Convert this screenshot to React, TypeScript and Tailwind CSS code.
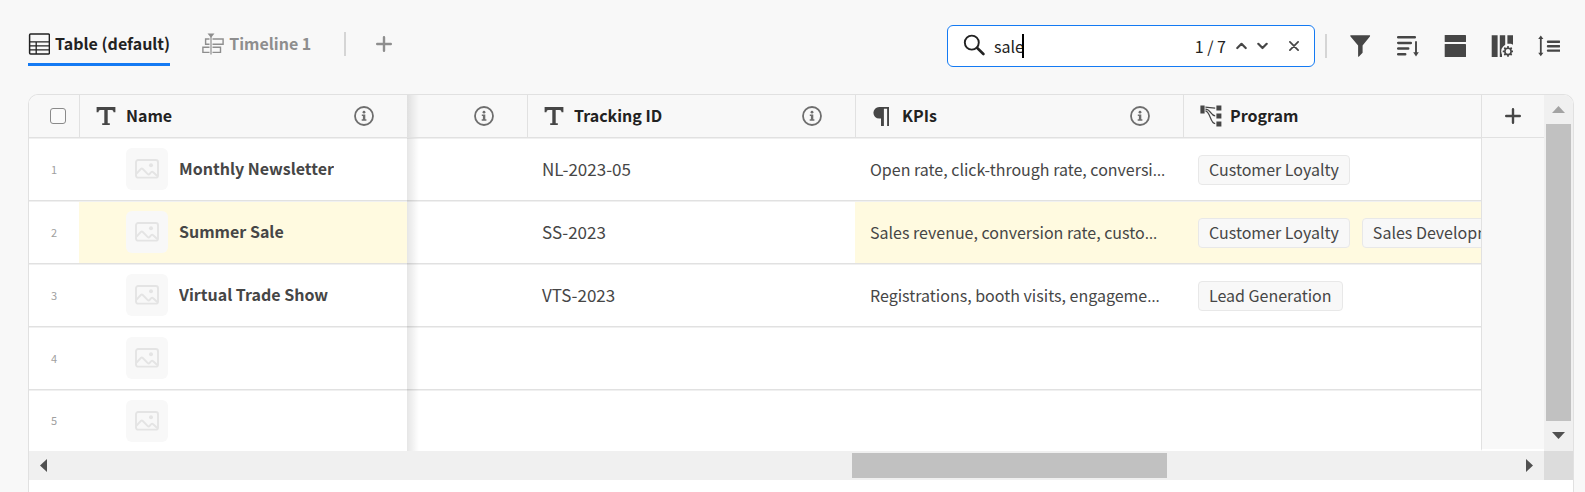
import { useState, type ReactNode } from "react";

type Row = { name: string; tracking: string; kpis: string; programs: string[]; nameHit?: boolean; kpiHit?: boolean };

const rows: Row[] = [
  { name: "Monthly Newsletter", tracking: "NL-2023-05", kpis: "Open rate, click-through rate, conversi", programs: ["Customer Loyalty"] },
  {
    name: "Summer Sale",
    tracking: "SS-2023",
    kpis: "Sales revenue, conversion rate, custo",
    programs: ["Customer Loyalty", "Sales Development"],
    nameHit: true,
    kpiHit: true,
  },
  { name: "Virtual Trade Show", tracking: "VTS-2023", kpis: "Registrations, booth visits, engageme", programs: ["Lead Generation"] },
  { name: "", tracking: "", kpis: "", programs: [] },
  { name: "", tracking: "", kpis: "", programs: [] },
];

function TableIcon() {
  return (
    <svg width="22" height="22" viewBox="0 0 22 22" fill="none" stroke="#222" aria-hidden="true">
      <rect x="1.6" y="1" width="19.800" height="20" rx="1" strokeWidth="1.5" />
      <path d="M1.600 8.800h20M1.600 12.800h20M1.600 16.800h20M8.200 9v12" strokeWidth="1.300" />
    </svg>
  );
}

function TimelineIcon() {
  return (
    <svg width="22" height="22" viewBox="0 0 22 22" fill="none" stroke="#8e8e8e" aria-hidden="true">
      <path d="M5.5 .5h7L9 4.8z" fill="#8e8e8e" stroke="none" />
      <path d="M9 3v18.5" strokeWidth="1.2" />
      <path d="M7.500 6H3.600v5.200h3.900M10.500 6h10.600v5.200H10.500M7.500 14.200H.900v5.200h6.600M10.500 14.200h8v5.200h-8" strokeWidth="1.400" />
    </svg>
  );
}

function PlusIcon() {
  return (
    <svg width="16" height="16" viewBox="0 0 16 16" fill="none" stroke="currentColor" strokeWidth="2.4" strokeLinecap="round" aria-hidden="true">
      <path d="M8 1.2v13.6M1.2 8h13.6" />
    </svg>
  );
}

function SearchIcon() {
  return (
    <svg width="22" height="22" viewBox="0 0 22 22" fill="none" stroke="#222" aria-hidden="true">
      <circle cx="8.8" cy="8.6" r="7" strokeWidth="1.9" />
      <path d="M14 13.8l6.400 6.200" strokeWidth="2.600" strokeLinecap="round" />
    </svg>
  );
}

function InfoIcon() {
  return (
    <svg width="20" height="20" viewBox="0 0 20 20" fill="#6e6e6e" aria-hidden="true">
      <circle cx="10" cy="10" r="9" fill="none" stroke="#6e6e6e" strokeWidth="1.8" />
      <circle cx="10" cy="6.2" r="1.4" />
      <path d="M7.800 8.400h3.500v4.900h1.100v1.500H7.700v-1.500h1.200V9.900H7.800z" />
    </svg>
  );
}

function TextIcon() {
  return (
    <svg width="20" height="20" viewBox="0 0 20 20" fill="#464646" aria-hidden="true">
      <path d="M.6 1h18.8v5.2h-1.9c-.1-1.5-.6-2.2-2-2.2h-3.8v13.2h2.100V19H6.200v-1.800h2.100V4H4.500c-1.400 0-1.900.7-2 2.200H.6z" />
    </svg>
  );
}

function ParagraphIcon() {
  return (
    <svg width="20" height="20" viewBox="0 0 20 20" fill="#464646" aria-hidden="true">
      <path d="M7.200 1H17v19h-1.900V2.800h-3.200V20H9v-7.400H7.200a5.800 5.800 0 0 1 0-11.600z" />
    </svg>
  );
}

function ConnectionIcon() {
  return (
    <svg width="22" height="22" viewBox="0 0 22 22" fill="#464646" aria-hidden="true">
      <path d="M.4.6h4.200v8H.4zM16.400.6h5v5h-5zM16.400 8.600h5v5h-5zM16.400 16.400h5v5h-5z" />
      <path d="M5.400 2.200c4 0 5 .900 9.800.900M5.400 4.100c5.600 0 5 6.800 9.800 6.800M5.400 5.800c5.200.600 4.500 12.800 9.800 12.800" fill="none" stroke="#464646" strokeWidth="1.200" />
    </svg>
  );
}

function FilterIcon() {
  return (
    <svg width="22" height="22" viewBox="0 0 22 22" fill="#464646" aria-hidden="true">
      <path d="M.900.300h18.600c.600 0 .800.600.400 1.100L12.600 10.600v7.200L9 21.600c-.400.400-.900.200-.900-.400V10.600L.500 1.400C.100.900.300.300.900.300z" />
    </svg>
  );
}

function SortIcon() {
  return (
    <svg width="22" height="22" viewBox="0 0 22 22" fill="none" stroke="#464646" aria-hidden="true">
      <path d="M1.200 2.200h16.600M1.200 7.900h12.600M1.200 13.600h10M1.200 19.200h7" strokeWidth="2.500" strokeLinecap="round" />
      <path d="M19 7v11.500" strokeWidth="1.900" strokeLinecap="round" />
      <path d="M16.200 17.200h5.600L19 21.500z" fill="#464646" stroke="none" />
    </svg>
  );
}

function GroupIcon() {
  return (
    <svg width="22" height="22" viewBox="0 0 22 22" fill="#464646" aria-hidden="true">
      <rect x=".700" y="0" width="21.300" height="7" rx=".600" />
      <rect x=".700" y="9" width="21.300" height="13" rx=".600" />
    </svg>
  );
}

const teeth = [0, 45, 90, 135, 180, 225, 270, 315];

function ColumnsIcon() {
  return (
    <svg width="22" height="22" viewBox="0 0 22 22" fill="#464646" aria-hidden="true">
      <path d="M.700.300h5.900V22H.700zM8.800.300h5.400v9.400l-3.200 4V22H8.800zM16.400.300H22v9.400l-2-1h-3.600z" />
      <circle cx="17" cy="16.400" r="6.800" fill="#f8f8f8" />
      <circle cx="17" cy="16.400" r="3.100" fill="none" stroke="#464646" strokeWidth="1.600" />
      {teeth.map((a) => (
        <rect key={a} x="16.100" y="11.100" width="1.800" height="2.200" rx=".500" transform={`rotate(${a} 17 16.400)`} />
      ))}
    </svg>
  );
}

function RowHeightIcon() {
  return (
    <svg width="22" height="22" viewBox="0 0 22 22" fill="#464646" aria-hidden="true">
      <path d="M2.800 .500L5.400 4H.200zM2.800 21.300L.200 17.800h5.200z" />
      <path d="M2.800 3v16" fill="none" stroke="#464646" strokeWidth="1.800" />
      <path d="M10 6.700h11.300M10 11.200h11.300M10 15.600h11.300" fill="none" stroke="#464646" strokeWidth="2.400" strokeLinecap="round" />
    </svg>
  );
}

function PictureIcon() {
  return (
    <svg width="24" height="20" viewBox="0 0 24 20" fill="none" stroke="#e4e4e4" strokeWidth="1.900" aria-hidden="true">
      <rect x="1" y="1" width="22" height="17.600" rx="2.200" />
      <path d="M1.500 14.600l4.300-4.600q1-1 2 0l5 5.200q.700.700 1.500 0l1.900-2q1-1 2 0l4 3.800" />
      <circle cx="16" cy="6.200" r="2" fill="#e4e4e4" stroke="none" />
    </svg>
  );
}

const arrowPaths = {
  up: "M0 10l6.500-7 6.500 7z",
  down: "M0 2l6.500 7 6.500-7z",
  left: "M10 0l-7 6.500 7 6.500z",
  right: "M3 0l7 6.500-7 6.500z",
};

function Arrow({ dir, muted }: { dir: keyof typeof arrowPaths; muted?: boolean }) {
  return (
    <svg width="13" height="13" viewBox="0 0 13 13" fill={muted ? "#a3a3a3" : "#505050"} aria-hidden="true">
      <path d={arrowPaths[dir]} />
    </svg>
  );
}

function PinShadow({ last }: { last?: boolean }) {
  return (
    <span
      className={`absolute left-full top-0 w-3 bg-linear-to-r from-black/10 to-transparent ${last ? "bottom-0" : "-bottom-px"}`}
    />
  );
}

function HeaderCell({ icon, label, info, pinned, first }: { icon?: ReactNode; label?: string; info?: boolean; pinned?: boolean; first?: boolean }) {
  return (
    <th scope="col" className={`relative border-b border-[#e1e1e1] p-0 text-left font-bold ${first ? "" : "border-l"}`}>
      <div className="flex h-[42px] items-center pl-4 pr-[33px]">
        <span className="flex w-[30px] shrink-0 items-center">{icon}</span>
        <span className="truncate pb-0.5 leading-6">{label}</span>
        {info && (
          <button type="button" aria-label={`About ${label || "column"}`} className="ml-auto shrink-0">
            <InfoIcon />
          </button>
        )}
      </div>
      {pinned && <PinShadow />}
    </th>
  );
}

function Tag({ children }: { children: ReactNode }) {
  return (
    <span className="flex h-[30px] shrink-0 items-center whitespace-nowrap rounded border border-[#e8e8e8] bg-[#f8f8f8] px-2.5 pb-0.5 leading-6">
      {children}
    </span>
  );
}

function DataRow({ row, index, last }: { row: Row; index: number; last: boolean }) {
  const line = last ? "shadow-[inset_0_1px_0_#f0f0f0]" : "border-b border-[#e1e1e1] shadow-[inset_0_1px_0_#f0f0f0]";
  return (
    <tr className={last ? "h-[61px]" : "h-[63px]"}>
      <td className={`p-0 text-center text-[11px] text-[#a0a0a0] ${line}`}>{index}</td>
      <td className={`relative p-0 ${line} ${row.nameHit ? "bg-[#fffae0]" : ""}`}>
        <div className="flex items-center gap-[11px] pl-[47px]">
          <span className="flex size-[42px] shrink-0 items-center justify-center rounded-md bg-[#f8f8f8]">
            <PictureIcon />
          </span>
          <span className="truncate pb-0.5 font-bold leading-6">{row.name}</span>
        </div>
        <PinShadow last={last} />
      </td>
      <td className={`p-0 ${line}`} />
      <td className={`truncate py-0 pl-[15px] pr-4 text-[17px] leading-6 ${line}`}>{row.tracking}</td>
      <td className={`overflow-hidden whitespace-nowrap py-0 pl-[15px] pr-0 leading-6 ${line} ${row.kpiHit ? "bg-[#fffae0]" : ""}`}>
        {row.kpis}
        {row.kpis && <span className="font-['Open_Sans',sans-serif]">…</span>}
      </td>
      <td className={`overflow-hidden pb-0 pl-[15px] pr-0 pt-0.5 ${line} ${row.kpiHit ? "bg-[#fffae0]" : ""}`}>
        <div className="flex gap-3">
          {row.programs.map((p) => (
            <Tag key={p}>{p}</Tag>
          ))}
        </div>
      </td>
      <td className={`border-l border-[#e1e1e1] bg-[#f8f8f8] p-0 ${last ? "border-b-2 border-b-white" : ""}`} />
    </tr>
  );
}

export default function App() {
  const [query, setQuery] = useState("sale");
  return (
    <div className="flex min-h-screen flex-col bg-[#f8f8f8] pl-7 pr-[11px] font-['Noto_Sans_CJK_SC',sans-serif] text-base text-[#464646]">
      <header className="flex items-start justify-between pb-[27px] pr-3.5 pt-[25px]">
        <nav className="flex items-start font-bold">
          <button type="button" className="border-b-3 border-[#147af3] text-[#222]">
            <span className="flex h-[38px] items-center gap-[5px] leading-6">
              <TableIcon />
              <span className="pb-0.5">Table (default)</span>
            </span>
          </button>
          <button type="button" className="ml-8 flex h-[38px] items-center gap-[5px] leading-6 text-[#8e8e8e]">
            <TimelineIcon />
            <span className="pb-0.5">Timeline 1</span>
          </button>
          <div className="ml-[33px] flex h-[38px] items-center gap-[30px] text-[#8e8e8e]">
            <span className="h-6 w-0.5 bg-[#d5d5d5]" />
            <button type="button" aria-label="Add view">
              <PlusIcon />
            </button>
          </div>
        </nav>
        <div className="flex items-center">
          <div className="flex h-[42px] w-[368px] items-center rounded-md border border-[#147af3] bg-white px-[15px] text-[#222]">
            <span className="-mt-0.5 shrink-0">
              <SearchIcon />
            </span>
            <div className="relative ml-2 min-w-0 flex-1">
              <input
                type="text"
                aria-label="Search"
                value={query}
                onChange={(e) => setQuery(e.target.value)}
                className="block w-full bg-transparent pl-px leading-6 caret-transparent outline-none"
              />
              <span className="absolute left-[29px] top-0 h-6 w-0.5 bg-black" />
            </div>
            <span className="leading-6">1 / 7</span>
            <button type="button" aria-label="Previous match" className="ml-2.5">
              <svg width="11" height="8" viewBox="0 0 11 8" fill="none" stroke="#464646" strokeWidth="2.200" strokeLinecap="round" strokeLinejoin="round">
                <path d="M1.300 6l4.200-4.200L9.700 6" />
              </svg>
            </button>
            <button type="button" aria-label="Next match" className="ml-2.5">
              <svg width="11" height="8" viewBox="0 0 11 8" fill="none" stroke="#464646" strokeWidth="2.200" strokeLinecap="round" strokeLinejoin="round">
                <path d="M1.300 1.800L5.500 6l4.200-4.200" />
              </svg>
            </button>
            <button type="button" aria-label="Clear search" className="ml-[21px]">
              <svg width="10" height="10" viewBox="0 0 10 10" fill="none" stroke="#464646" strokeWidth="1.700" strokeLinecap="round">
                <path d="M.900.900l8.200 8.200M9.100.900L.900 9.100" />
              </svg>
            </button>
          </div>
          <span className="ml-2.5 mr-[23px] h-6 w-0.5 bg-[#d5d5d5]" />
          <div className="flex items-center gap-[25px]">
            <button type="button" aria-label="Filter"><FilterIcon /></button>
            <button type="button" aria-label="Sort"><SortIcon /></button>
            <button type="button" aria-label="Group"><GroupIcon /></button>
            <button type="button" aria-label="Columns"><ColumnsIcon /></button>
            <button type="button" aria-label="Row height"><RowHeightIcon /></button>
          </div>
        </div>
      </header>

      <main className="flex-1 overflow-hidden rounded-t-[10px] border border-b-0 border-[#e1e1e1] bg-white">
        <div className="flex">
          <div className="min-w-0 flex-1">
            <table className="w-full table-fixed border-separate border-spacing-0">
              <colgroup>
                <col className="w-[50px]" />
                <col className="w-[328px]" />
                <col className="w-[120px]" />
                <col className="w-[328px]" />
                <col className="w-[328px]" />
                <col />
                <col className="w-[63px]" />
              </colgroup>
              <thead className="bg-[#f8f8f8] text-[#222]">
                <tr>
                  <th scope="col" className="border-b border-[#e1e1e1] p-0">
                    <input
                      type="checkbox"
                      aria-label="Select all rows"
                      className="ml-[21px] block size-4 appearance-none rounded-[3px] border border-[#8a8a8a] bg-[#fafafa]"
                    />
                  </th>
                  <HeaderCell icon={<TextIcon />} label="Name" info pinned />
                  <HeaderCell info first />
                  <HeaderCell icon={<TextIcon />} label="Tracking ID" info />
                  <HeaderCell icon={<ParagraphIcon />} label="KPIs" info />
                  <HeaderCell icon={<ConnectionIcon />} label="Program" />
                  <th scope="col" className="border-b border-l border-[#e1e1e1] p-0">
                    <button type="button" aria-label="Add column" className="mx-auto block text-[#464646]">
                      <PlusIcon />
                    </button>
                  </th>
                </tr>
              </thead>
              <tbody>
                {rows.map((row, i) => (
                  <DataRow key={i} row={row} index={i + 1} last={i === rows.length - 1} />
                ))}
              </tbody>
            </table>
          </div>
          <div className="flex w-[29px] flex-col items-center bg-[#f0f0f0]">
            <span className="flex h-[29px] items-center">
              <Arrow dir="up" muted />
            </span>
            <span className="w-[25px] flex-1 bg-[#c1c1c1]" />
            <span className="flex h-[30px] items-center">
              <Arrow dir="down" />
            </span>
          </div>
        </div>
        <div className="flex h-[29px] bg-[#f0f0f0]">
          <span className="flex w-[29px] items-center justify-center">
            <Arrow dir="left" />
          </span>
          <span className="flex flex-1 items-center">
            <span className="grow-[794]" />
            <span className="h-[25px] w-[315px] bg-[#c1c1c1]" />
            <span className="grow-[348]" />
          </span>
          <span className="flex w-[29px] items-center justify-center">
            <Arrow dir="right" />
          </span>
          <span className="w-[29px] bg-[#dcdcdc]" />
        </div>
      </main>
    </div>
  );
}
